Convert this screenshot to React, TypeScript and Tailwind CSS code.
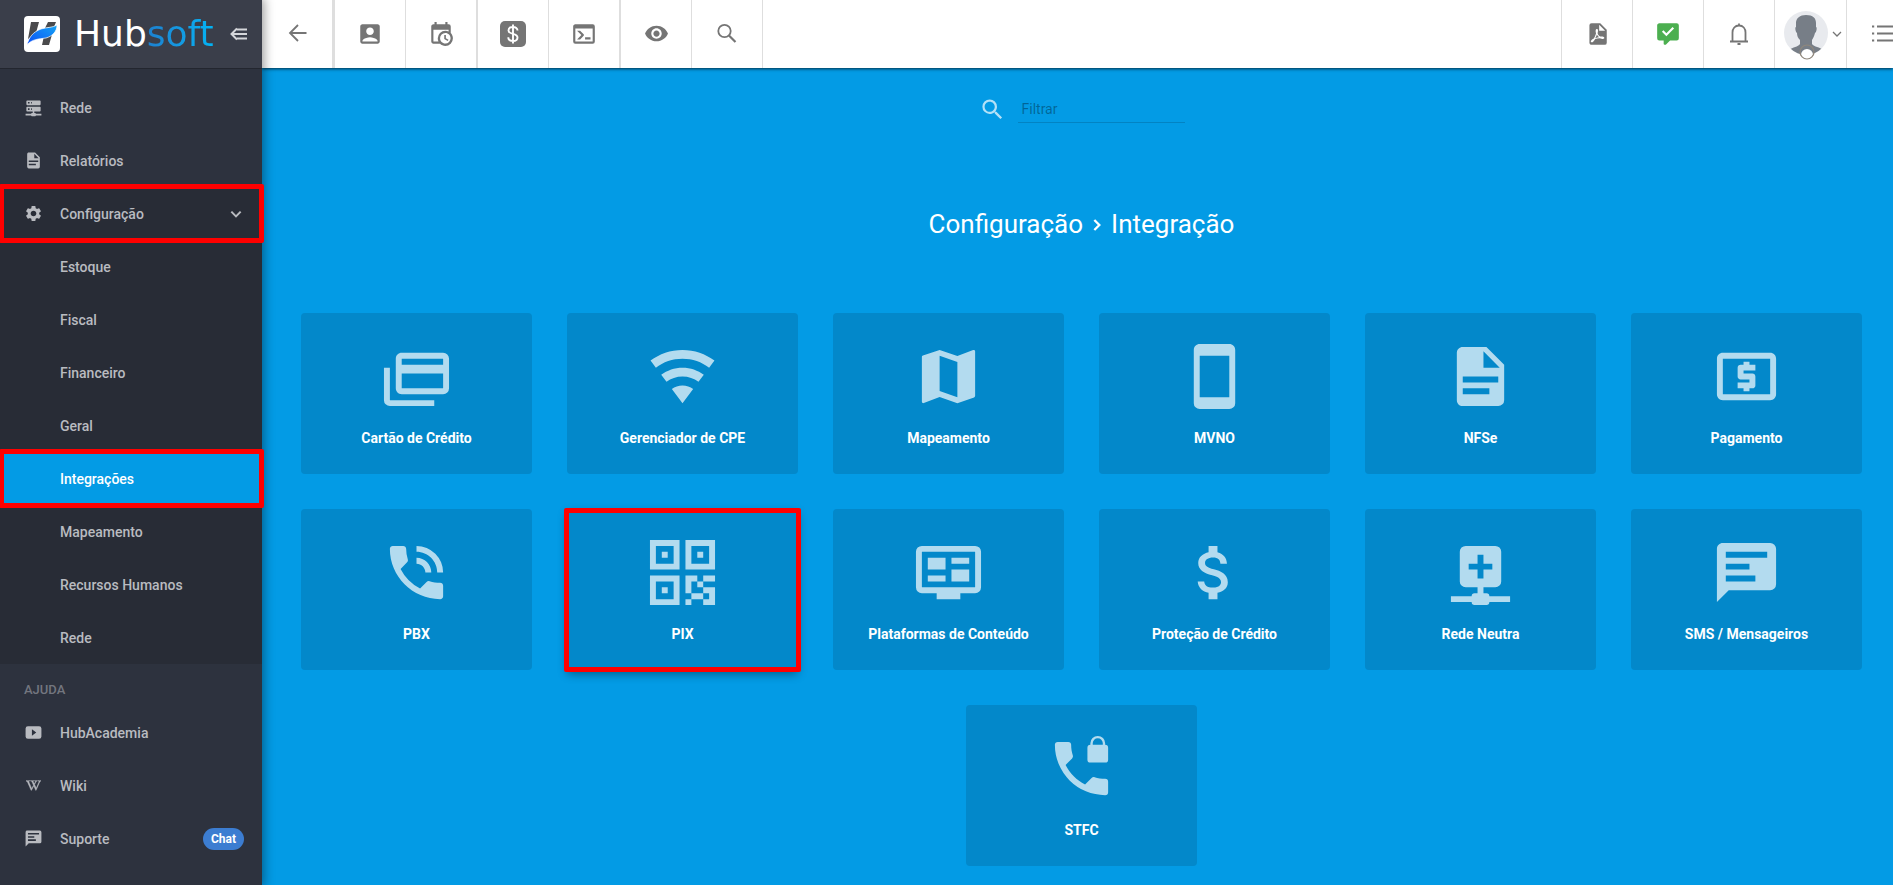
import type { ReactNode } from 'react'
import clsx from 'clsx'
import { FaWikipediaW } from 'react-icons/fa'
import {
  MdAccountBox,
  MdAttachMoney,
  MdLocalAtm,
  MdPhoneInTalk,
  MdSettings,
  MdVisibility,
} from 'react-icons/md'

const paths = {
  cards:
    'M21,8V6H7V8H21M21,16V11H7V16H21M21,4A2,2 0 0,1 23,6V16A2,2 0 0,1 21,18H7C5.89,18 5,17.1 5,16V6C5,4.89 5.89,4 7,4H21M3,20H18V22H3A2,2 0 0,1 1,20V9H3V20Z',
  wifi: 'M12,21L15.6,16.2C14.6,15.45 13.35,15 12,15C10.65,15 9.4,15.45 8.4,16.2L12,21M12,3C7.95,3 4.21,4.34 1.2,6.6L3,9C5.5,7.12 8.62,6 12,6C15.38,6 18.5,7.12 21,9L22.8,6.6C19.79,4.34 16.05,3 12,3M12,9C9.3,9 6.81,9.89 4.8,11.4L6.6,13.8C8.1,12.67 9.97,12 12,12C14.03,12 15.9,12.67 17.4,13.8L19.2,11.4C17.19,9.89 14.7,9 12,9Z',
  map: 'M15,19L9,16.89V5L15,7.11M20.5,3C20.44,3 20.39,3 20.34,3L15,5.1L9,3L3.36,4.9C3.15,4.97 3,5.15 3,5.38V20.5A0.5,0.5 0 0,0 3.5,21C3.55,21 3.61,21 3.66,20.97L9,18.9L15,21L20.64,19.1C20.85,19 21,18.85 21,18.62V3.5A0.5,0.5 0 0,0 20.5,3Z',
  cellphone:
    'M17,19H7V5H17M17,1H7C5.89,1 5,1.89 5,3V21A2,2 0 0,0 7,23H17A2,2 0 0,0 19,21V3C19,1.89 18.1,1 17,1Z',
  file: 'M13,9H18.5L13,3.5V9M6,2H14L20,8V20A2,2 0 0,1 18,22H6C4.89,22 4,21.1 4,20V4C4,2.89 4.89,2 6,2M15,18V16H6V18H15M18,14V12H6V14H18Z',
  qrcode:
    'M1,1H11V11H1ZM3,3V9H9V3ZM5,5H7V7H5ZM13,1H23V11H13ZM15,3V9H21V3ZM17,5H19V7H17ZM1,13H11V23H1ZM3,15V21H9V15ZM5,17H7V19H5ZM13,13H17V15H19V17H17V15H15V19H13ZM19,13H23V15H19ZM19,17H23V23H19V21H21V19H19ZM15,19H19V21H15ZM13,21H15V23H13Z',
  tv: 'M21,3H3A2,2 0 0,0 1,5V17A2,2 0 0,0 3,19H8V21H16V19H21A2,2 0 0,0 23,17V5A2,2 0 0,0 21,3ZM21,17H3V5H21ZM5,7H11V11H5ZM5,13H11V15H5ZM13,7H19V9H13ZM13,11H19V15H13Z',
  plusNetwork:
    'M15,20A1,1 0 0,0 14,19H13V17H17A2,2 0 0,0 19,15V5A2,2 0 0,0 17,3H7A2,2 0 0,0 5,5V15A2,2 0 0,0 7,17H11V19H10A1,1 0 0,0 9,20H2V22H9A1,1 0 0,0 10,23H14A1,1 0 0,0 15,22H22V20H15M8,9H11V6H13V9H16V11H13V14H11V11H8Z',
  message:
    'M20,2A2,2 0 0,1 22,4V16A2,2 0 0,1 20,18H6L2,22V4C2,2.89 2.9,2 4,2H20M5,5V7H19V5H5M5,9V11H13V9H5M5,13V15H15V13H5Z',
  phoneLock:
    'M19.2,4H15.8V3.5A1.7,1.7 0 0,1 17.5,1.8A1.7,1.7 0 0,1 19.2,3.5M20,4V3.5A2.5,2.5 0 0,0 17.5,1A2.5,2.5 0 0,0 15,3.5V4A1,1 0 0,0 14,5V9A1,1 0 0,0 15,10H20A1,1 0 0,0 21,9V5A1,1 0 0,0 20,4M20,15.5C18.75,15.5 17.55,15.3 16.43,14.93C16.08,14.82 15.69,14.9 15.41,15.17L13.21,17.37C10.38,15.93 8.06,13.62 6.62,10.79L8.82,8.58C9.1,8.31 9.18,7.92 9.07,7.57C8.7,6.45 8.5,5.25 8.5,4A1,1 0 0,0 7.5,3H4A1,1 0 0,0 3,4A17,17 0 0,0 20,21A1,1 0 0,0 21,20V16.5A1,1 0 0,0 20,15.5Z',
  server:
    'M13,19H14A1,1 0 0,1 15,20H22V22H15A1,1 0 0,1 14,23H10A1,1 0 0,1 9,22H2V20H9A1,1 0 0,1 10,19H11V17H4A1,1 0 0,1 3,16V12A1,1 0 0,1 4,11H20A1,1 0 0,1 21,12V16A1,1 0 0,1 20,17H13V19M4,3H20A1,1 0 0,1 21,4V8A1,1 0 0,1 20,9H4A1,1 0 0,1 3,8V4A1,1 0 0,1 4,3M9,7H10V5H9V7M9,15H10V13H9V15M5,5V7H7V5H5M5,13V15H7V13H5Z',
  video:
    'M5,4H19A3,3 0 0,1 22,7V17A3,3 0 0,1 19,20H5A3,3 0 0,1 2,17V7A3,3 0 0,1 5,4ZM10,8V16L15.5,12Z',
  calendarClock:
    'M15,13H16.5V15.82L18.94,17.23L18.19,18.53L15,16.69V13M19,8H5V19H9.67C9.24,18.09 9,17.07 9,16A7,7 0 0,1 16,9C17.07,9 18.09,9.24 19,9.67V8M5,21C3.89,21 3,20.1 3,19V5C3,3.89 3.89,3 5,3H6V1H8V3H16V1H18V3H19A2,2 0 0,1 21,5V11.1C22.24,12.36 23,14.09 23,16A7,7 0 0,1 16,23C14.09,23 12.36,22.24 11.1,21H5M16,11.15A4.85,4.85 0 0,0 11.15,16C11.15,18.68 13.32,20.85 16,20.85A4.85,4.85 0 0,0 20.85,16C20.85,13.32 18.68,11.15 16,11.15Z',
  console:
    'M20,19V7H4V19H20M20,3A2,2 0 0,1 22,5V19A2,2 0 0,1 20,21H4A2,2 0 0,1 2,19V5C2,3.89 2.9,3 4,3H20M13,17V15H18V17H13M9.58,13L5.57,9H8.4L11.7,12.3C12.09,12.69 12.09,13.33 11.7,13.72L8.42,17H5.59L9.58,13Z',
  magnify:
    'M9.5,3A6.5,6.5 0 0,1 16,9.5C16,11.11 15.41,12.59 14.44,13.73L14.71,14H15.5L20.5,19L19,20.5L14,15.5V14.71L13.73,14.44C12.59,15.41 11.11,16 9.5,16A6.5,6.5 0 0,1 3,9.5A6.5,6.5 0 0,1 9.5,3M9.5,5C7,5 5,7 5,9.5C5,12 7,14 9.5,14C12,14 14,12 14,9.5C14,7 12,5 9.5,5Z',
  pdf: 'M14,9H19.5L14,3.5V9M7,2H15L21,8V20A2,2 0 0,1 19,22H7C5.89,22 5,21.1 5,20V4A2,2 0 0,1 7,2M11.93,12.44C12.34,13.34 12.86,14.08 13.46,14.59L13.87,14.91C13,15.07 11.8,15.35 10.53,15.84L10.42,15.88L10.92,14.84C11.37,13.97 11.7,13.18 11.93,12.44M18.41,16.25C18.59,16.07 18.68,15.84 18.69,15.59C18.72,15.39 18.67,15.2 18.57,15.04C18.28,14.57 17.53,14.35 16.29,14.35L15,14.42L14.13,13.84C13.5,13.32 12.93,12.41 12.53,11.28L12.57,11.14C12.9,9.81 13.21,8.2 12.55,7.54C12.39,7.38 12.17,7.3 11.94,7.3H11.7C11.33,7.3 11,7.69 10.91,8.07C10.54,9.4 10.76,10.13 11.13,11.34C10.88,12.23 10.56,13.25 10.05,14.28L9.09,16.08L8.2,16.57C7,17.32 6.43,18.16 6.32,18.69C6.28,18.88 6.3,19.05 6.37,19.23L6.4,19.28L6.88,19.59L7.32,19.7C8.13,19.7 9.05,18.75 10.29,16.63L10.47,16.56C11.5,16.23 12.78,16 14.5,15.81C15.53,16.32 16.74,16.55 17.5,16.55C17.94,16.55 18.24,16.44 18.41,16.25Z',
  commentCheck:
    'M20,2A2,2 0 0,1 22,4V16A2,2 0 0,1 20,18H13.9L10.2,21.71C10,21.9 9.75,22 9.5,22H9A1,1 0 0,1 8,21V18H4A2,2 0 0,1 2,16V4C2,2.89 2.9,2 4,2ZM10.5,14L17.6,6.9L16.2,5.5L10.5,11.2L7.8,8.5L6.4,9.9Z',
}

function Icon({ d, className }: { d: string; className?: string }) {
  return (
    <svg viewBox="0 0 24 24" className={className} fill="currentColor" fillRule="evenodd" aria-hidden="true">
      <path d={d} />
    </svg>
  )
}

function LineIcon({ children, className }: { children: ReactNode; className?: string }) {
  return (
    <svg viewBox="0 0 24 24" className={className} fill="none" stroke="currentColor" strokeWidth="1.8" aria-hidden="true">
      {children}
    </svg>
  )
}

const cardIcon = 'size-[71px]'

const cards = [
  { label: 'Cartão de Crédito', icon: <Icon d={paths.cards} className={cardIcon} /> },
  { label: 'Gerenciador de CPE', icon: <Icon d={paths.wifi} className={cardIcon} /> },
  { label: 'Mapeamento', icon: <Icon d={paths.map} className={cardIcon} /> },
  { label: 'MVNO', icon: <Icon d={paths.cellphone} className={cardIcon} /> },
  { label: 'NFSe', icon: <Icon d={paths.file} className={cardIcon} /> },
  { label: 'Pagamento', icon: <MdLocalAtm className={cardIcon} /> },
  { label: 'PBX', icon: <MdPhoneInTalk className={cardIcon} /> },
  { label: 'PIX', icon: <Icon d={paths.qrcode} className={cardIcon} />, marked: true },
  { label: 'Plataformas de Conteúdo', icon: <Icon d={paths.tv} className={cardIcon} /> },
  { label: 'Proteção de Crédito', icon: <MdAttachMoney className={cardIcon} /> },
  { label: 'Rede Neutra', icon: <Icon d={paths.plusNetwork} className={cardIcon} /> },
  { label: 'SMS / Mensageiros', icon: <Icon d={paths.message} className={cardIcon} /> },
  { label: 'STFC', icon: <Icon d={paths.phoneLock} className={cardIcon} /> },
]

const submenu = [
  'Estoque',
  'Fiscal',
  'Financeiro',
  'Geral',
  'Integrações',
  'Mapeamento',
  'Recursos Humanos',
  'Rede',
]

function NavLink({ icon, label, badge }: { icon: ReactNode; label: string; badge?: string }) {
  return (
    <a href="#" className="flex h-[53px] items-center pr-[18px] pl-6">
      <span className="flex w-9 items-center">{icon}</span>
      <span className="flex-1">{label}</span>
      {badge && (
        <span className="flex h-[22px] items-center rounded-full bg-[#3c7dd1] px-2 text-xs font-bold text-white">
          {badge}
        </span>
      )}
    </a>
  )
}

function Logo() {
  return (
    <a href="#" className="flex items-center gap-3.5" aria-label="Hubsoft">
      <svg viewBox="0 0 36 36" className="size-9" aria-hidden="true">
        <defs>
          <linearGradient id="swoosh" x1="0" y1="1" x2="1" y2="0">
            <stop offset="0" stopColor="#0a4df5" />
            <stop offset="1" stopColor="#16a5f5" />
          </linearGradient>
        </defs>
        <rect width="36" height="36" rx="4" fill="#fff" />
        <path d="M7 6h8l-3 11-8 6zM24 6h8l-2 5-9 1zM20 20l9-5-4 14h-7z" fill="#4a4a4c" />
        <path d="M3 29c2-8 6-13 14-16 6-2 11-1 16-4 0 6-4 11-11 13-7 1-14 1-19 7z" fill="url(#swoosh)" stroke="#fff" strokeWidth="0.7" />
      </svg>
      <span className="font-[DejaVu_Sans,sans-serif] text-4xl leading-none text-white">
        Hub
        <span className="bg-linear-to-r from-[#1c80cf] to-[#00b4f5] bg-clip-text text-transparent">soft</span>
      </span>
    </a>
  )
}

function Sidebar() {
  return (
    <aside className="relative z-20 flex w-[262px] shrink-0 flex-col bg-[#2d323e] text-sm font-medium text-[#b9bbc0] shadow-[0_0_10px_2px_rgba(0,0,0,0.4)]">
      <div className="flex h-[69px] items-center justify-between border-b border-[#23262f] bg-[#3a3e4a] pr-3.5 pl-6">
        <Logo />
        <button type="button" aria-label="Recolher menu" className="text-[#d4d6da]">
          <svg viewBox="0 0 18 14" className="h-3.5 w-[18px]" fill="none" stroke="currentColor" strokeWidth="2" aria-hidden="true">
            <path d="M7 1.500L1.500 7L7 12.500M2 7H17M7 2.500H17M7 11.500H17" />
          </svg>
        </button>
      </div>

      <nav className="flex flex-col pt-3">
        <NavLink label="Rede" icon={<Icon d={paths.server} className="size-[19px]" />} />
        <NavLink label="Relatórios" icon={<Icon d={paths.file} className="size-[19px]" />} />

        <div className="bg-[#282c36]">
          <button type="button" className="relative flex h-[53px] w-full items-center pr-[18px] pl-6 text-left">
            <span className="flex w-9 items-center">
              <MdSettings className="size-[19px]" />
            </span>
            <span className="flex-1">Configuração</span>
            <LineIcon className="size-4">
              <path d="M5 8.500L12 15.500L19 8.500" strokeWidth="3" />
            </LineIcon>
            <span className="absolute -inset-y-[3px] -right-0.5 -left-px rounded-xs border-5 border-[#ff0000]" />
          </button>
          {submenu.map((label) => (
            <a
              key={label}
              href="#"
              className={clsx(
                'relative flex h-[53px] items-center pl-[60px]',
                label === 'Integrações' && 'bg-[#039be5] text-white',
              )}
            >
              {label}
              {label === 'Integrações' && (
                <span className="absolute -inset-y-[3px] -right-0.5 -left-px rounded-xs border-5 border-[#ff0000]" />
              )}
            </a>
          ))}
        </div>

        <h2 className="flex h-[42px] items-center pt-2.5 pl-6 text-[13px] text-[#73767f]">AJUDA</h2>
        <NavLink label="HubAcademia" icon={<Icon d={paths.video} className="size-[19px]" />} />
        <NavLink label="Wiki" icon={<FaWikipediaW className="size-[19px] stroke-current stroke-20 p-0.5" />} />
        <NavLink label="Suporte" icon={<Icon d={paths.message} className="size-[19px]" />} badge="Chat" />
      </nav>
    </aside>
  )
}

function ToolButton({ label, wide, children }: { label: string; wide?: boolean; children: ReactNode }) {
  return (
    <button
      type="button"
      aria-label={label}
      className={clsx(
        'flex shrink-0 items-center justify-center border-[#dedede] pb-px',
        wide ? 'w-[72px] border-r-2' : 'w-[71px] border-r',
      )}
    >
      {children}
    </button>
  )
}

function Avatar() {
  return (
    <svg viewBox="0 0 44 50" className="mt-1 h-[50px] w-11 shrink-0" aria-hidden="true">
      <defs>
        <clipPath id="avatar">
          <circle cx="22" cy="22" r="22" />
        </clipPath>
      </defs>
      <circle cx="22" cy="22" r="22" fill="#e8eaee" />
      <g clipPath="url(#avatar)">
        <path
          d="M12 12c0-5 4-8 10-8 7 0 10 3 10 8v4c1 0 1 4-1 6-1 4-2 5-3 7v4c2 3 8 3 11 6l-4 7H9l-4-7c4-3 9-3 11-6v-4c-2-2-3-4-3-7-2-2-2-6-1-6z"
          fill="#777e87"
        />
      </g>
      <path d="M17 44a6 6 0 0 1 12 0z" fill="#fff" />
      <circle cx="23" cy="41" r="7" fill="none" stroke="#8f877c" strokeWidth="1.2" />
    </svg>
  )
}

function Toolbar() {
  return (
    <header className="relative z-10 flex h-[68px] justify-between bg-white text-[#757575] shadow-[0_1px_3px_rgba(0,0,0,0.7)]">
      <div className="flex">
        <button
          type="button"
          aria-label="Voltar"
          className="flex w-[73px] items-center justify-center border-r-3 border-[#dedede] pb-0.5 pl-0.5"
        >
          <LineIcon className="size-6">
            <path d="M20.500 12H4.500M12 4L4 12L12 20" />
          </LineIcon>
        </button>
        <ToolButton label="Clientes">
          <MdAccountBox className="size-[26px]" />
        </ToolButton>
        <ToolButton label="Agenda" wide>
          <Icon d={paths.calendarClock} className="size-[26px]" />
        </ToolButton>
        <ToolButton label="Financeiro">
          <svg viewBox="0 0 26 26" className="size-[26px]" aria-hidden="true">
            <rect width="26" height="26" rx="5" fill="currentColor" />
            <path
              d="M17.500 9.500C17.500 7.200 15.800 6 13 6S8.500 7.200 8.500 9.400C8.500 14 17.500 11.800 17.500 16.500C17.500 18.800 15.600 20 13 20S8.300 18.800 8.300 16.300M13 3.500V22.500"
              fill="none"
              stroke="#fff"
              strokeWidth="1.9"
            />
          </svg>
        </ToolButton>
        <ToolButton label="Terminal" wide>
          <Icon d={paths.console} className="size-[26px]" />
        </ToolButton>
        <ToolButton label="Visualizar">
          <MdVisibility className="size-[25px]" />
        </ToolButton>
        <ToolButton label="Pesquisar">
          <LineIcon className="size-6">
            <circle cx="9.500" cy="9" r="6.200" />
            <path d="M14 13.500L20.500 20" strokeWidth="2.200" />
          </LineIcon>
        </ToolButton>
      </div>

      <div className="flex border-l border-[#dedede]">
        <ToolButton label="Relatórios em PDF">
          <Icon d={paths.pdf} className="size-[26px]" />
        </ToolButton>
        <ToolButton label="Situação">
          <Icon d={paths.commentCheck} className="size-[26px] text-[#4caf50]" />
        </ToolButton>
        <ToolButton label="Notificações">
          <LineIcon className="size-6">
            <path d="M3 19.500H21M5.500 19V10.500C5.500 6.500 8 3.500 12 3.500S18.500 6.500 18.500 10.500V19M12 1.500V4M10.500 22H13.500" />
          </LineIcon>
        </ToolButton>
        <button
          type="button"
          aria-label="Minha conta"
          className="flex w-[72px] items-center justify-end gap-[3px] border-r border-[#dedede] pr-[3px]"
        >
          <Avatar />
          <LineIcon className="size-3">
            <path d="M4 8L12 16L20 8" strokeWidth="2.500" />
          </LineIcon>
        </button>
        <button type="button" aria-label="Painel rápido" className="flex w-[46px] items-center overflow-hidden pl-6">
          <LineIcon className="size-6 shrink-0">
            <path d="M6 4.500H24M6 11.500H24M6 18.500H24M1 4.500H3.200M1 11.500H3.200M1 18.500H3.200" strokeWidth="2" />
          </LineIcon>
        </button>
      </div>
    </header>
  )
}

export default function App() {
  return (
    <div className="flex min-h-screen bg-[#039be5] font-[Roboto,sans-serif]">
      <Sidebar />
      <div className="flex min-w-0 flex-1 flex-col">
        <Toolbar />
        <main className="flex flex-1 flex-col items-center pb-[19px] pl-2">
          <label className="flex items-center gap-3 pt-6">
            <Icon d={paths.magnify} className="mt-1 size-[27px] text-white/70" />
            <input
              type="text"
              placeholder="Filtrar"
              aria-label="Filtrar"
              className="h-[31px] w-[167px] border-b border-black/15 bg-transparent px-1 pt-1 text-sm text-white outline-none placeholder:text-black/35"
            />
          </label>

          <h1 className="mt-[85px] flex items-center text-[26px] leading-8 text-white">
            Configuração
            <LineIcon className="mx-1.5 size-4">
              <path d="M8 6L15.500 13.500L8 21" strokeWidth="3.500" />
            </LineIcon>
            Integração
          </h1>

          <div className="mt-[73px] flex flex-wrap justify-center gap-[35px]">
            {cards.map(({ label, icon, marked }) => (
              <a
                key={label}
                href="#"
                className={clsx(
                  'relative flex h-[161px] w-[231px] flex-col items-center rounded bg-[#0388ca] pt-7 text-white/70',
                  marked && 'shadow-[0_4px_10px_rgba(0,0,0,0.4)]',
                )}
              >
                {icon}
                <span className="mt-4 text-sm font-bold text-white">{label}</span>
                {marked && (
                  <span className="absolute -inset-x-[3px] -top-px -bottom-0.5 rounded-xs border-5 border-[#ff0000]" />
                )}
              </a>
            ))}
          </div>
        </main>
      </div>
    </div>
  )
}
